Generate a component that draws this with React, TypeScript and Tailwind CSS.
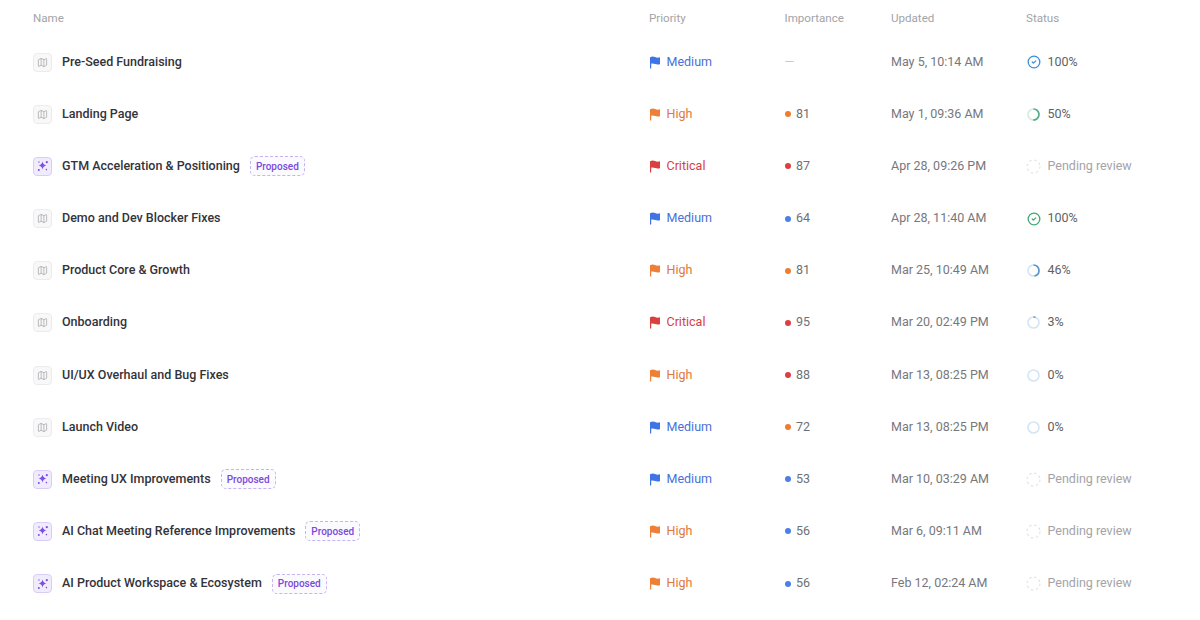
import { Map, CircleCheck } from "lucide-react";

type Row = {
  name: string;
  proposed?: boolean;
  priority: "Medium" | "High" | "Critical";
  imp: number | null;
  dot?: "orange" | "red" | "blue";
  updated: string;
  status: string;
  kind: "check-blue" | "check-green" | "ring" | "pending";
  pct?: number;
  ring?: string;
  track?: string;
};

const rows: Row[] = [
  { name: "Pre-Seed Fundraising", priority: "Medium", imp: null, updated: "May 5, 10:14 AM", status: "100%", kind: "check-blue" },
  { name: "Landing Page", priority: "High", imp: 81, dot: "orange", updated: "May 1, 09:36 AM", status: "50%", kind: "ring", pct: 50, ring: "#4fae84", track: "#d3ebe0" },
  { name: "GTM Acceleration & Positioning", proposed: true, priority: "Critical", imp: 87, dot: "red", updated: "Apr 28, 09:26 PM", status: "Pending review", kind: "pending" },
  { name: "Demo and Dev Blocker Fixes", priority: "Medium", imp: 64, dot: "blue", updated: "Apr 28, 11:40 AM", status: "100%", kind: "check-green" },
  { name: "Product Core & Growth", priority: "High", imp: 81, dot: "orange", updated: "Mar 25, 10:49 AM", status: "46%", kind: "ring", pct: 46, ring: "#5b93cf", track: "#d5e5f3" },
  { name: "Onboarding", priority: "Critical", imp: 95, dot: "red", updated: "Mar 20, 02:49 PM", status: "3%", kind: "ring", pct: 6, ring: "#5b93cf", track: "#d5e5f3" },
  { name: "UI/UX Overhaul and Bug Fixes", priority: "High", imp: 88, dot: "red", updated: "Mar 13, 08:25 PM", status: "0%", kind: "ring", pct: 0, ring: "#5b93cf", track: "#d5e5f3" },
  { name: "Launch Video", priority: "Medium", imp: 72, dot: "orange", updated: "Mar 13, 08:25 PM", status: "0%", kind: "ring", pct: 0, ring: "#5b93cf", track: "#d5e5f3" },
  { name: "Meeting UX Improvements", proposed: true, priority: "Medium", imp: 53, dot: "blue", updated: "Mar 10, 03:29 AM", status: "Pending review", kind: "pending" },
  { name: "AI Chat Meeting Reference Improvements", proposed: true, priority: "High", imp: 56, dot: "blue", updated: "Mar 6, 09:11 AM", status: "Pending review", kind: "pending" },
  { name: "AI Product Workspace & Ecosystem", proposed: true, priority: "High", imp: 56, dot: "blue", updated: "Feb 12, 02:24 AM", status: "Pending review", kind: "pending" },
];

function Flag({ className }: { className: string }) {
  return (
    <svg viewBox="0 0 12 13" className={className} fill="currentColor">
      <path d="M1 1.3C3.2.2 4.8.6 6.1 1.1c1.4.5 2.8.8 4.9.2v6.9c-2 .7-3.5.4-4.9-.1-1.3-.5-2.8-.9-3.9-.3v4.7H1V1.3z" />
    </svg>
  );
}

function Spark() {
  return (
    <svg viewBox="0 0 12 12" className="w-[12px] h-[12px] text-[#7c4fe0]" fill="currentColor">
      <path d="M5.5 1.6c.4 2.2 1.6 3.4 3.9 3.9-2.3.5-3.5 1.7-3.9 3.9-.4-2.2-1.6-3.4-3.9-3.9 2.3-.5 3.5-1.7 3.9-3.9z" />
      <circle cx="9.8" cy="2.2" r="1.1" />
      <circle cx="1.8" cy="10" r="1" />
      <circle cx="9.4" cy="9.6" r=".8" />
      <circle cx="2" cy="2" r=".7" />
    </svg>
  );
}

function StatusIcon({ row }: { row: Row }) {
  if (row.kind === "check-blue") return <CircleCheck className="w-[14px] h-[14px] mx-[0.5px] text-[#3b8fd9]" strokeWidth={2.2} />;
  if (row.kind === "check-green") return <CircleCheck className="w-[14px] h-[14px] mx-[0.5px] text-[#3fa873]" strokeWidth={2.2} />;
  if (row.kind === "pending")
    return (
      <svg viewBox="0 0 15 15" className="w-[15px] h-[15px]" fill="none">
        <circle cx="7.5" cy="7.5" r="6.5" stroke="#e2e2e5" strokeWidth="1.2" strokeDasharray="2.4 2.7" />
      </svg>
    );
  const c = 2 * Math.PI * 5.5;
  return (
    <svg viewBox="0 0 13 13" className="w-[13px] h-[13px] mx-px -rotate-90" fill="none">
      <circle cx="6.5" cy="6.5" r="5.5" stroke={row.track} strokeWidth="1.6" />
      <circle cx="6.5" cy="6.5" r="5.5" stroke={row.ring} strokeWidth="1.6" strokeDasharray={`${(c * (row.pct ?? 0)) / 100} ${c}`} />
    </svg>
  );
}

const priorityText = { Medium: "text-[#4a6fd8]", High: "text-[#e2773a]", Critical: "text-[#d5403f]" };
const priorityFlag = { Medium: "text-[#3f74e6]", High: "text-[#ed8036]", Critical: "text-[#d9403f]" };
const dots = { orange: "bg-[#ed7d31]", red: "bg-[#dc3f41]", blue: "bg-[#4a80e8]" };
const cols = "grid grid-cols-[616px_135.5px_106.5px_135px_1fr] items-center";

export default function App() {
  return (
    <div className="w-[1200px] h-[620px] overflow-hidden bg-white px-[33px] text-[12.5px] font-['Roboto',sans-serif]">
      <div className={`${cols} h-[36px] pt-[1px] text-[11.6px] text-[#a3a3a8]`}>
        <div>Name</div>
        <div>Priority</div>
        <div>Importance</div>
        <div>Updated</div>
        <div>Status</div>
      </div>
      {rows.map((r) => (
        <div key={r.name} className={`${cols} h-[52.17px]`}>
          <div className="flex items-center">
            {r.proposed ? (
              <span className="w-[19px] h-[19px] rounded-[4px] border border-[#d9cdf7] bg-[#f1ecfd] flex items-center justify-center">
                <Spark />
              </span>
            ) : (
              <span className="w-[19px] h-[19px] rounded-[4px] border border-[#ececee] bg-[#f8f8f9] flex items-center justify-center">
                <Map className="w-[11px] h-[11px] text-[#a3a3a8]" strokeWidth={1.6} />
              </span>
            )}
            <span className="ml-[10px] font-medium text-[#33333a]">{r.name}</span>
            {r.proposed && (
              <span className="ml-[10px] h-[20px] px-[5px] flex items-center rounded-[5px] border border-dashed border-[#c5b3f2] bg-[#fbfaff] text-[10px] font-medium text-[#7a4ada]">
                Proposed
              </span>
            )}
          </div>
          <div className="flex items-center gap-[5.5px]">
            <Flag className={`w-[12px] h-[13px] ${priorityFlag[r.priority]}`} />
            <span className={priorityText[r.priority]}>{r.priority}</span>
          </div>
          <div className="flex items-center gap-[5.5px] text-[#6f6f75]">
            {r.imp === null ? (
              <span className="text-[#c9c9cd]">—</span>
            ) : (
              <>
                <span className={`w-[6px] h-[6px] rounded-full ${dots[r.dot!]}`} />
                <span>{r.imp}</span>
              </>
            )}
          </div>
          <div className="text-[#77777d]">{r.updated}</div>
          <div className="flex items-center gap-[6.5px]">
            <StatusIcon row={r} />
            <span className={r.kind === "pending" ? "text-[#a3a3a8]" : "text-[#5f5f65]"}>{r.status}</span>
          </div>
        </div>
      ))}
    </div>
  );
}
